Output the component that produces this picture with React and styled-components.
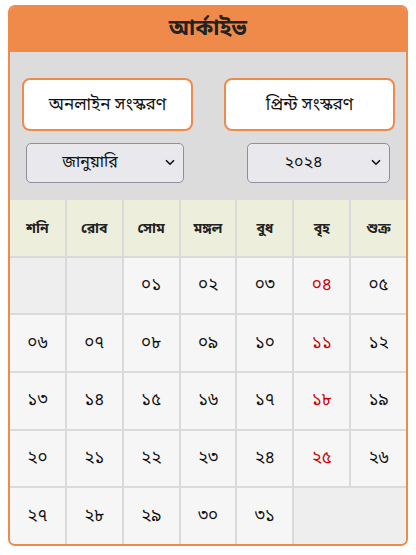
import styled, { createGlobalStyle } from "styled-components";

const Global = createGlobalStyle`
  body {
    margin: 0;
    background: #fff;
    font-family: "Noto Sans Bengali", "Lohit Bengali", "FreeSans", "Noto Sans", sans-serif;
  }
`

const Page = styled.div`
  padding: 5px 8px;
`

const Card = styled.div`
  width: 396px;
  border: 2px solid #f08a4b;
  border-radius: 7px;
  overflow: hidden;
  background: #dcdcdc;
`

const Title = styled.div`
  height: 45px;
  background: #f08a4b;
  color: #222;
  font-size: 22px;
  font-weight: 700;
  display: flex;
  align-items: center;
  justify-content: center;
`

const Controls = styled.div`
  padding: 26px 11px 17px 12px;
  display: flex;
  flex-direction: column;
  gap: 12px;
`

const Row = styled.div`
  display: flex;
  justify-content: space-between;
  padding: ${p => p.$inset || "0"};
`

const EditionButton = styled.button`
  width: 171px;
  height: 53px;
  padding: 2px 0 0;
  background: #fff;
  border: 2px solid #f08a4b;
  border-radius: 8px;
  font-family: inherit;
  font-size: 17px;
  color: #111;
`

const SelectBox = styled.div`
  position: relative;
  width: ${p => p.$w}px;
  height: 40px;
`

const Select = styled.select`
  appearance: none;
  width: 100%;
  height: 100%;
  padding: 0 30px 0 0;
  background: #e9e9ed;
  border: 1px solid #8f8f9d;
  border-radius: 5px;
  font-family: inherit;
  font-size: 16px;
  color: #111;
  text-align: center;
  text-align-last: center;
`

const Chevron = styled.svg`
  position: absolute;
  right: 9px;
  top: 16px;
  pointer-events: none;
`

const Grid = styled.div`
  display: grid;
  grid-template-columns: repeat(7, 1fr);
  grid-template-rows: repeat(6, 1fr);
  height: 344px;
  gap: 2px;
  background: #dadada;
`

const Head = styled.div`
  background: #eeeedc;
  display: flex;
  align-items: center;
  justify-content: center;
  padding-top: 3px;
  font-size: 14px;
  font-weight: 700;
  color: #222;
`

const Day = styled.div`
  background: ${p => (p.$empty ? "#eeeeee" : "#f6f6f6")};
  grid-column: span ${p => p.$span || 1};
  display: flex;
  align-items: center;
  justify-content: center;
  font-size: 17px;
  color: ${p => (p.$red ? "#cc0000" : "#111")};
`

const months = ["জানুয়ারি", "ফেব্রুয়ারি", "মার্চ", "এপ্রিল", "মে", "জুন", "জুলাই", "আগস্ট", "সেপ্টেম্বর", "অক্টোবর", "নভেম্বর", "ডিসেম্বর"]
const weekdays = ["শনি", "রোব", "সোম", "মঙ্গল", "বুধ", "বৃহ", "শুক্র"]
const bn = n => String(n).padStart(2, "0").replace(/\d/g, d => "০১২৩৪৫৬৭৮৯"[d])

function Dropdown({ w, value, children }) {
  return (
    <SelectBox $w={w}>
      <Select defaultValue={value}>{children}</Select>
      <Chevron width="10" height="7" viewBox="0 0 10 7">
        <path d="M1 1.2 L5 5.2 L9 1.2" fill="none" stroke="#111" strokeWidth="1.6" />
      </Chevron>
    </SelectBox>
  )
}

export default function App() {
  const cells = []
  cells.push(<Day key="e1" $empty />, <Day key="e2" $empty />)
  for (let d = 1; d <= 31; d++) {
    cells.push(<Day key={d} $red={(d + 2) % 7 === 6}>{bn(d)}</Day>)
  }
  cells.push(<Day key="e3" $empty $span={2} />)

  return (
    <Page>
      <Global />
      <Card>
        <Title>আর্কাইভ</Title>
        <Controls>
          <Row>
            <EditionButton>অনলাইন সংস্করণ</EditionButton>
            <EditionButton>প্রিন্ট সংস্করণ</EditionButton>
          </Row>
          <Row $inset="0 5px 0 4px">
            <Dropdown w={158} value="0">
              {months.map((m, i) => <option key={m} value={i}>{m}</option>)}
            </Dropdown>
            <Dropdown w={143} value="2024">
              <option value="2023">২০২৩</option>
              <option value="2024">২০২৪</option>
            </Dropdown>
          </Row>
        </Controls>
        <Grid>
          {weekdays.map(w => <Head key={w}>{w}</Head>)}
          {cells}
        </Grid>
      </Card>
    </Page>
  )
}
